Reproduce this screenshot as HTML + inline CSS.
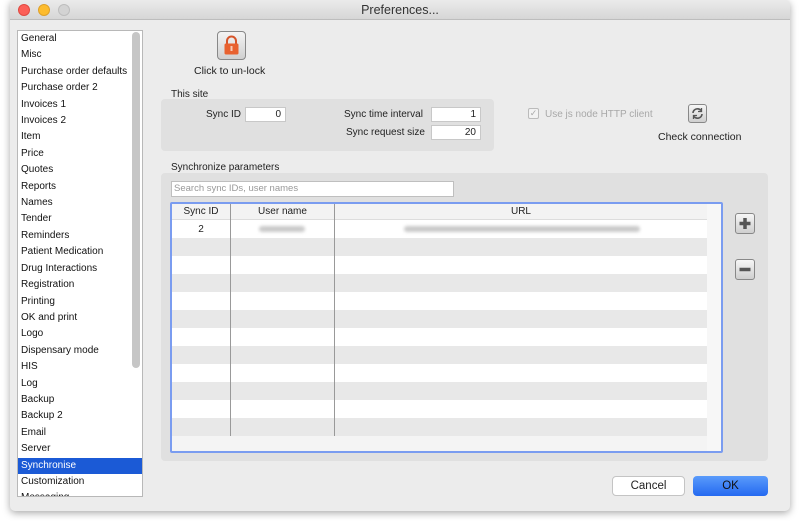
<!DOCTYPE html>
<html><head><style>
*{margin:0;padding:0;box-sizing:border-box}
body{width:800px;height:521px;background:#fff;font-family:"Liberation Sans",sans-serif;font-size:10.5px;color:#222;position:relative;overflow:hidden}
.win{position:absolute;left:10px;top:0;width:780px;height:511px;background:#ececec;border-radius:5px;box-shadow:0 2px 8px rgba(0,0,0,.35);overflow:hidden}
.title{height:20px;background:linear-gradient(#ebebeb,#d6d6d6);border-bottom:1px solid #bdbdbd;text-align:center;font-size:12.5px;line-height:20px;color:#333}
.dot{position:absolute;top:4px;width:12px;height:12px;border-radius:50%}
.a{position:absolute}
.list{left:7px;top:30px;width:126px;height:467px;background:#fff;border:1px solid #b8b8b8;overflow:hidden}
.list div{height:16.42px;line-height:16.4px;padding-left:3px;font-size:10px;color:#111}
.list .sel{background:#1b5ad6;color:#fff}
.sb{position:absolute;right:2px;top:1px;width:8px;height:336px;border-radius:4px;background:#c6c6c6}
.panel{background:#e0e0e0;border-radius:4px}
.inp{position:absolute;background:#fff;border:1px solid #c8c8c8;height:15px;text-align:right;padding-right:4px;line-height:13px;font-size:10px}
.lbl{position:absolute;font-size:10px;color:#222}
.row{position:absolute;left:0;width:535px;height:18px}
.btn{position:absolute;height:20px;border-radius:4px;display:flex;align-items:center;justify-content:center;font-size:11.5px}
.blur{position:absolute;height:6px;background:#c9c9c9;border-radius:3px;filter:blur(1.5px)}
</style></head><body>
<div class="win">
<div class="title">Preferences...</div>
<div class="dot" style="left:8px;background:#fc5f57;border:1px solid #df4a42"></div>
<div class="dot" style="left:28px;background:#fdbc2e;border:1px solid #dea12b"></div>
<div class="dot" style="left:48px;background:#d3d3d3;border:1px solid #bdbdbd"></div>

<div class="a list">
<div>General</div><div>Misc</div><div>Purchase order defaults</div><div>Purchase order 2</div><div>Invoices 1</div><div>Invoices 2</div><div>Item</div><div>Price</div><div>Quotes</div><div>Reports</div><div>Names</div><div>Tender</div><div>Reminders</div><div>Patient Medication</div><div>Drug Interactions</div><div>Registration</div><div>Printing</div><div>OK and print</div><div>Logo</div><div>Dispensary mode</div><div>HIS</div><div>Log</div><div>Backup</div><div>Backup 2</div><div>Email</div><div>Server</div><div class="sel">Synchronise</div><div>Customization</div><div>Messaging</div>
<span class="sb"></span>
</div>

<div class="a" style="left:207px;top:31px;width:29px;height:29px;border:1px solid #888;border-radius:4px;background:linear-gradient(#f4f4f4,#d0d0d0)">
<svg width="27" height="27" viewBox="0 0 27 27"><path d="M9 12V9a4.5 4.5 0 0 1 9 0v3" fill="none" stroke="#d6542a" stroke-width="2"/><rect x="6.5" y="11.5" width="14" height="11" rx="1.5" fill="#e8612f"/><rect x="12.5" y="14" width="2" height="5" fill="#f6c9b5"/></svg>
</div>
<div class="lbl" style="left:184px;top:65px;font-size:10.5px">Click to un-lock</div>

<div class="lbl" style="left:161px;top:89px">This site</div>
<div class="a panel" style="left:151px;top:99px;width:333px;height:52px"></div>
<div class="lbl" style="left:196px;top:109px">Sync ID</div>
<div class="inp" style="left:235px;top:107px;width:41px">0</div>
<div class="lbl" style="left:334px;top:109px">Sync time interval</div>
<div class="inp" style="left:421px;top:107px;width:50px">1</div>
<div class="lbl" style="left:336px;top:127px">Sync request size</div>
<div class="inp" style="left:421px;top:125px;width:50px">20</div>

<div class="a" style="left:518px;top:108px;width:11px;height:11px;border:1px solid #bbb;border-radius:2px;background:#f2f2f2;font-size:9px;line-height:9px;color:#aaa;text-align:center">✓</div>
<div class="lbl" style="left:535px;top:109px;color:#a8a8a8">Use js node HTTP client</div>
<div class="a" style="left:678px;top:104px;width:19px;height:19px;border:1px solid #888;border-radius:3px;background:linear-gradient(#f6f6f6,#cfcfcf)">
<svg width="17" height="17" viewBox="0 0 17 17"><path d="M4 8a4.5 4.5 0 0 1 8-2.5M13 9a4.5 4.5 0 0 1-8 2.5" fill="none" stroke="#555" stroke-width="1.6"/><path d="M12.5 3v3.5H9M4.5 14v-3.5H8" fill="none" stroke="#555" stroke-width="1.3"/></svg>
</div>
<div class="lbl" style="left:648px;top:131px;font-size:10.5px">Check connection</div>

<div class="lbl" style="left:161px;top:162px">Synchronize parameters</div>
<div class="a panel" style="left:151px;top:173px;width:607px;height:288px"></div>
<div class="a" style="left:161px;top:181px;width:283px;height:16px;background:#fff;border:1px solid #bfbfbf;font-size:9.5px;color:#999;padding-left:2px;line-height:14px">Search sync IDs, user names</div>

<div class="a" style="left:160px;top:202px;width:553px;height:251px;border:2px solid #7a9cf0;border-radius:2px;background:#f7f7f7;overflow:hidden">
 <div class="row" style="top:0;height:16px;background:#f3f3f3;border-bottom:1px solid #ddd"></div>
 <div class="row" style="top:16px;background:#fff"></div>
 <div class="row" style="top:34px;background:#e8e8e8"></div>
 <div class="row" style="top:52px;background:#fff"></div>
 <div class="row" style="top:70px;background:#e8e8e8"></div>
 <div class="row" style="top:88px;background:#fff"></div>
 <div class="row" style="top:106px;background:#e8e8e8"></div>
 <div class="row" style="top:124px;background:#fff"></div>
 <div class="row" style="top:142px;background:#e8e8e8"></div>
 <div class="row" style="top:160px;background:#fff"></div>
 <div class="row" style="top:178px;background:#e8e8e8"></div>
 <div class="row" style="top:196px;background:#fff"></div>
 <div class="row" style="top:214px;background:#e8e8e8"></div>
 <div class="row" style="top:232px;height:15px;background:#f4f4f4"></div>
 <div class="a" style="left:535px;top:0;width:14px;height:247px;background:#f7f7f7"></div>
 <div class="a" style="left:58px;top:0;width:1px;height:232px;background:#999"></div>
 <div class="a" style="left:162px;top:0;width:1px;height:232px;background:#999"></div>
 <div class="a" style="left:0;top:2px;width:58px;text-align:center;font-size:10px">Sync ID</div>
 <div class="a" style="left:59px;top:2px;width:103px;text-align:center;font-size:10px">User name</div>
 <div class="a" style="left:163px;top:2px;width:372px;text-align:center;font-size:10px">URL</div>
 <div class="a" style="left:0;top:20px;width:58px;text-align:center;font-size:10px">2</div>
 <div class="blur" style="left:87px;top:22px;width:46px"></div>
 <div class="blur" style="left:232px;top:22px;width:236px"></div>
</div>

<div class="a" style="left:725px;top:213px;width:20px;height:21px;border:1px solid #888;border-radius:3px;background:linear-gradient(#f6f6f6,#cfcfcf)"><svg width="18" height="19"><path d="M9 4v11M3.5 9.5h11" stroke="#555" stroke-width="3.5"/></svg></div>
<div class="a" style="left:725px;top:259px;width:20px;height:21px;border:1px solid #888;border-radius:3px;background:linear-gradient(#f6f6f6,#cfcfcf)"><svg width="18" height="19"><path d="M3.5 9.5h11" stroke="#555" stroke-width="3.5"/></svg></div>

<div class="btn" style="left:602px;top:476px;width:73px;background:#fff;border:1px solid #c4c4c4">Cancel</div>
<div class="btn" style="left:683px;top:476px;width:75px;background:linear-gradient(#5a9bfb,#2469f0);color:#111">OK</div>
</div>
</body></html>
